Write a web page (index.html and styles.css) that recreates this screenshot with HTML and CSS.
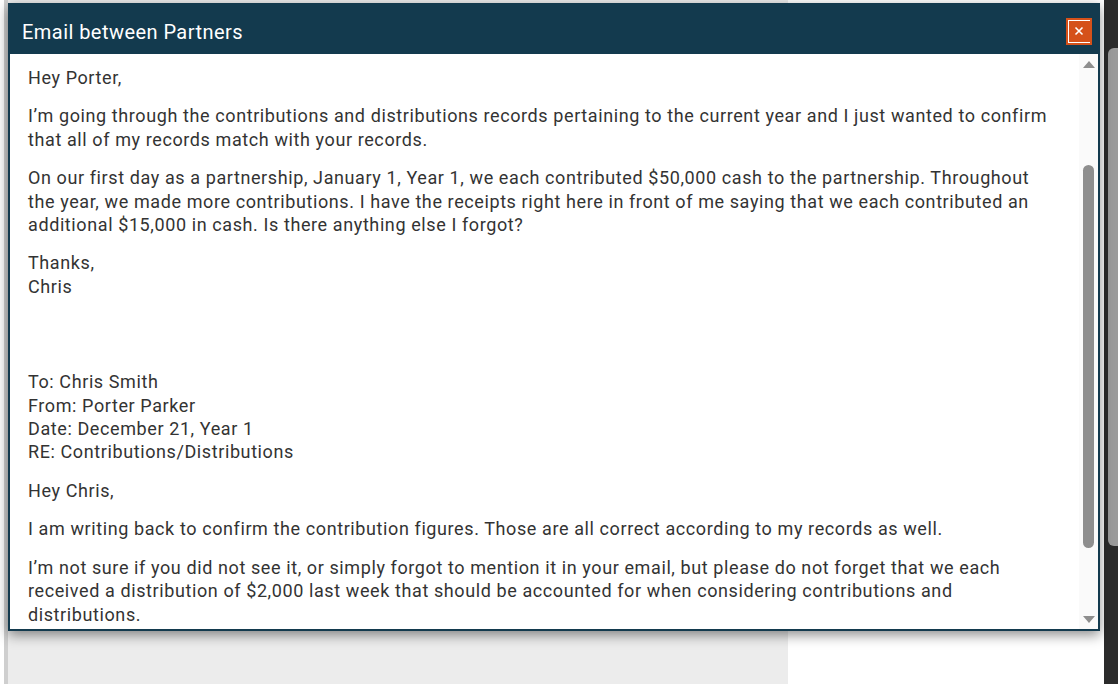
FILE: index.html
```html
<!DOCTYPE html>
<html>
<head>
<meta charset="utf-8">
<link rel="stylesheet" href="styles.css">
</head>
<body>
<div class="page">
  <div class="page-main">
    <div class="left-panel"></div>
    <div class="right-panel"></div>
  </div>
  <div class="page-scroll"><div class="page-thumb"></div></div>
</div>

<div class="modal">
  <div class="modal-header">
    <div class="modal-title">Email between Partners</div>
    <button class="close-btn" aria-label="Close">
      <svg width="10" height="10" viewBox="0 0 10 10"><path d="M1.5 1.5L8.5 8.5M8.5 1.5L1.5 8.5" stroke="#fff" stroke-width="1.6"/></svg>
    </button>
  </div>
  <div class="modal-body">
    <div class="content">
      <p>Hey Porter,</p>
      <p>I’m going through the contributions and distributions records pertaining to the current year and I just wanted to confirm that all of my records match with your records.</p>
      <p>On our first day as a partnership, January 1, Year 1, we each contributed $50,000 cash to the partnership. Throughout the year, we made more contributions. I have the receipts right here in front of me saying that we each contributed an additional $15,000 in cash. Is there anything else I forgot?</p>
      <p>Thanks,<br>Chris</p>
      <p class="memo">To: Chris Smith<br>From: Porter Parker<br>Date: December 21, Year 1<br>RE: Contributions/Distributions</p>
      <p>Hey Chris,</p>
      <p>I am writing back to confirm the contribution figures. Those are all correct according to my records as well.</p>
      <p>I’m not sure if you did not see it, or simply forgot to mention it in your email, but please do not forget that we each received a distribution of $2,000 last week that should be accounted for when considering contributions and distributions.</p>
    </div>
    <div class="scrollbar">
      <div class="arrow-up"></div>
      <div class="track"><div class="thumb"></div></div>
      <div class="arrow-down"></div>
    </div>
  </div>
</div>
</body>
</html>
```

FILE: styles.css
```css
html, body {
  margin: 0;
  padding: 0;
  height: 100%;
  overflow: hidden;
}
body {
  font-family: Roboto, "Liberation Sans", sans-serif;
  background: #ffffff;
}
.page {
  display: flex;
  height: 684px;
}
.page-main {
  flex: 1;
  display: flex;
  background: #ffffff;
}
.left-panel {
  width: 780px;
  margin-left: 4px;
  border-left: 4px solid #cfcfcf;
  background: #ececec;
}
.right-panel {
  flex: 1;
  background: #ffffff;
}
.page-scroll {
  width: 14px;
  background: #2b2b2b;
  display: flex;
  justify-content: flex-end;
}
.page-thumb {
  width: 10px;
  height: 498px;
  margin-top: 48px;
  background: #9b9b9b;
  border-radius: 6px 0 0 6px;
}
.modal {
  position: absolute;
  left: 8px;
  top: 3px;
  width: 1092px;
  height: 628px;
  box-sizing: border-box;
  border: 2px solid #133a4e;
  border-top: 0;
  background: #ffffff;
  display: flex;
  flex-direction: column;
  box-shadow: 0 4px 12px rgba(0, 0, 0, 0.45);
}
.modal-header {
  height: 51px;
  flex: none;
  background: #133a4e;
  display: flex;
  align-items: center;
  justify-content: space-between;
  padding: 0 8px 0 14px;
  margin: 0 -2px;
}
.modal-title {
  color: #ffffff;
  font-size: 20px;
  font-weight: 400;
  letter-spacing: 0.45px;
  padding-top: 7px;
}
.close-btn {
  width: 26px;
  height: 27px;
  padding: 0;
  margin-top: 5px;
  background: #d5511a;
  border: 2px solid #d5511a;
  box-sizing: border-box;
  display: flex;
  align-items: center;
  justify-content: center;
  box-shadow: inset 1px 1px 0 #ffffff, inset 0 -1px 0 #ffffff;
  cursor: pointer;
}
.modal-body {
  flex: 1;
  display: flex;
  min-height: 0;
}
.content {
  flex: 1;
  overflow: hidden;
  padding: 0 18px 0 18px;
  color: #333333;
  font-size: 18px;
  line-height: 23.4px;
  letter-spacing: 0.6px;
}
.content p {
  margin: 15px 0 0 0;
}
.content p:first-child {
  margin-top: 12px;
}
.content p.memo {
  margin-top: 72px;
}
.scrollbar {
  width: 19px;
  flex: none;
  background: #fafafa;
  display: flex;
  flex-direction: column;
  align-items: center;
}
.arrow-up {
  width: 0;
  height: 0;
  margin-top: 7px;
  border-left: 6px solid transparent;
  border-right: 6px solid transparent;
  border-bottom: 7px solid #8e8e8e;
}
.track {
  flex: 1;
  width: 100%;
  display: flex;
  justify-content: center;
}
.thumb {
  width: 11px;
  height: 383px;
  margin-top: 97px;
  background: #8e8e8e;
  border-radius: 6px;
}
.arrow-down {
  width: 0;
  height: 0;
  margin-bottom: 6px;
  border-left: 6px solid transparent;
  border-right: 6px solid transparent;
  border-top: 7px solid #8e8e8e;
}
```
